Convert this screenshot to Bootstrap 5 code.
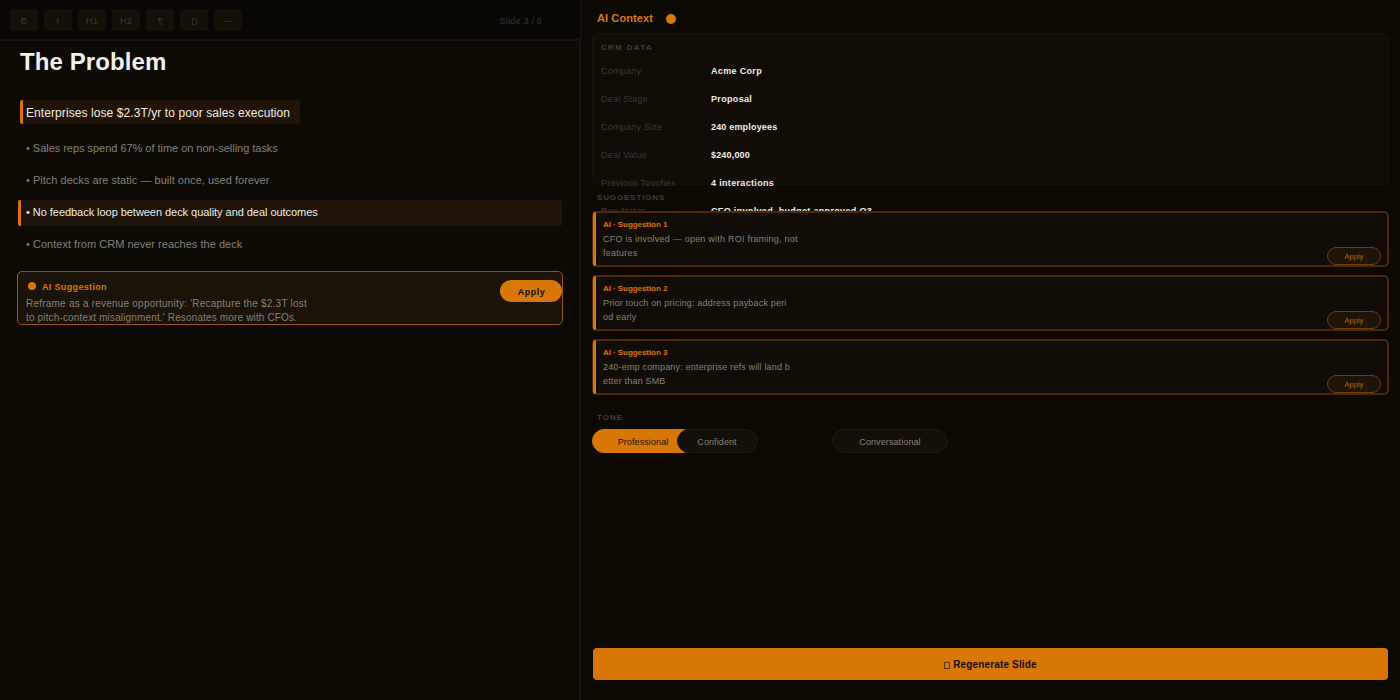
<!DOCTYPE html>
<html lang="en">
<head>
<meta charset="utf-8">
<meta name="viewport" content="width=device-width, initial-scale=1">
<title>AI Context – Slide Editor</title>
<link href="https://cdn.jsdelivr.net/npm/bootstrap@5.3.0/dist/css/bootstrap.min.css" rel="stylesheet">
<style>
:root{--amber:#d97706;--edge:#4a2a06}
body{font-family:"Liberation Sans",Arial,sans-serif;background:#0c0903;color:#f5f5f4;font-size:9px;line-height:14px;height:700px;overflow:hidden}
.editor{width:581px;background:#0d0a03;border-right:1px solid #141412}
.toolbar{height:41px;background:#080703;border-bottom:2px solid #141410;padding:0 38px 0 10px;gap:6px;color:#3b3935}
.tool{width:28px;height:22px;border-radius:3px;background:#141008;line-height:24px;text-align:center;letter-spacing:.3px}
.slide-no{letter-spacing:.2px;padding-top:2px}
.blank-glyph{display:inline-block;width:6px;height:7px;border:1px solid currentColor;opacity:.6;vertical-align:-1px}
.tool .blank-glyph{width:5px}
.canvas{flex:1;padding:0 17px 0 18px;border-right:1px solid #141412}
.slide-title{font-size:24px;line-height:28px;font-weight:700;margin:7px 0 24px 2px;letter-spacing:.1px;color:#f2f0ee}
.headline{width:280px;height:24px;margin-left:2px;border-left:3px solid var(--amber);border-radius:2px;background:#211407;font-size:12px;line-height:26px;padding-left:3px;color:#f0ece6;letter-spacing:.08px}
.points{margin:12px 0 0;padding:0;list-style:none;font-size:11px;color:#83807b}
.points li{height:26px;line-height:25px;padding-left:8px;margin-bottom:6px;border-radius:2px;letter-spacing:.02px}
.points li:first-child{letter-spacing:-.03px}
.points li.hot{background:#1f1409;border-left:3px solid var(--amber);padding-left:5px;color:#f0ece6;letter-spacing:-.045px}
.tip{position:relative;height:54px;margin:13px -1px 0 -1px;border:1.5px solid #9a560a;border-radius:5px;background:#1b1208;padding:7px 8px}
.tip-head{gap:6px;color:var(--amber);font-weight:700;letter-spacing:.34px;padding-left:2px;height:15px;padding-top:1px}
.tip-head .pip{margin-top:-2px}
.pip{width:8px;height:8px;border-radius:50%;background:var(--amber)}
.tip-body{font-size:10px;line-height:14px;color:#83807b;margin-top:3px;letter-spacing:.15px}
.tip-body span{letter-spacing:.22px}
.tip-apply{position:absolute;right:0;top:8px;width:62px;height:22px;border-radius:11px;background:var(--amber);color:#120c03;font-weight:700;line-height:24px;text-align:center;letter-spacing:.5px;padding-left:1px}
.context{flex:1;padding:0 11px}
.ctx-head{height:33px;padding:2px 5px 0;gap:13px;color:var(--amber);font-size:11px;font-weight:700;letter-spacing:.1px}
.ctx-head .pip{width:10px;height:10px;margin-top:2px}
.crm{height:152px;border:2px solid #141006;border-radius:5px;background:#110c05;padding:6px 7px}
.label{font-size:8px;font-weight:700;letter-spacing:1px;color:#403d39}
.crm .label{letter-spacing:1.3px}
.crm dl{margin:2px 0 0}
.crm .pair{height:28px;line-height:28px}
.crm dt{width:110px;font-weight:400;color:#3b3935;letter-spacing:.25px}
.crm dd{margin:0;font-weight:700;color:#f0ece6;letter-spacing:.33px}
.crm dd.snug{letter-spacing:.18px}
.sugg-label{padding:6px 5px;letter-spacing:.86px}
.tone-label{padding:8px 5px 4px}
.advice{position:relative;height:56px;margin-bottom:8px;border:2px solid var(--edge);border-radius:5px;background:#110c05;padding:5px 9px;color:#83807b;letter-spacing:.18px}
.advice.wide-set{letter-spacing:.23px}
.advice::before{content:"";position:absolute;left:-1px;top:-1px;bottom:-1px;width:3px;border-radius:2px 0 0 2px;background:var(--amber)}
.advice h3{font-size:8px;line-height:14px;font-weight:700;color:var(--amber);margin:0;letter-spacing:-.06px}
.mini{position:absolute;right:6px;bottom:0;width:54px;height:18px;border:1.5px solid #6e3e08;border-radius:9px;background:#1f1409;color:#b5650a;font-size:7.5px;line-height:17px;text-align:center;letter-spacing:0}
.tones{height:24px}
.tone{height:24px;border:1.5px solid #1c1a16;border-radius:12px;background:#141008;color:#83807b;line-height:24px;text-align:center;letter-spacing:.1px}
.tone.on{width:102px;background:var(--amber);border-color:var(--amber);color:#1d1003}
.tone.mid{width:81px;margin-left:-17px;padding-right:1px}
.tone.far{width:116px;margin-left:74px}
.regen{height:32px;margin:auto 1px 20px;border-radius:4px;background:var(--amber);color:#120c03;font-size:10px;font-weight:700;line-height:34px;text-align:center;letter-spacing:.15px}
</style>
</head>
<body class="d-flex">
<main class="editor d-flex flex-column flex-shrink-0">
  <div class="toolbar d-flex align-items-center">
    <div class="tool">B</div><div class="tool">I</div><div class="tool">H1</div><div class="tool">H2</div><div class="tool">¶</div><div class="tool"><span class="blank-glyph"></span></div><div class="tool">—</div>
    <div class="slide-no ms-auto">Slide 3 / 6</div>
  </div>
  <div class="canvas">
    <h1 class="slide-title">The Problem</h1>
    <div class="headline">Enterprises lose $2.3T/yr to poor sales execution</div>
    <ul class="points">
      <li>• Sales reps spend 67% of time on non-selling tasks</li>
      <li>• Pitch decks are static — built once, used forever</li>
      <li class="hot">• No feedback loop between deck quality and deal outcomes</li>
      <li>• Context from CRM never reaches the deck</li>
    </ul>
    <div class="tip">
      <div class="tip-head d-flex align-items-center"><span class="pip"></span>AI Suggestion</div>
      <div class="tip-body"><span>Reframe as a revenue opportunity: 'Recapture the $2.3T lost</span><br>to pitch-context misalignment.' Resonates more with CFOs.</div>
      <div class="tip-apply">Apply</div>
    </div>
  </div>
</main>
<aside class="context d-flex flex-column">
  <div class="ctx-head d-flex align-items-center">AI Context<span class="pip"></span></div>
  <section class="crm">
    <div class="label">CRM DATA</div>
    <dl>
      <div class="pair d-flex"><dt>Company</dt><dd>Acme Corp</dd></div>
      <div class="pair d-flex"><dt>Deal Stage</dt><dd>Proposal</dd></div>
      <div class="pair d-flex"><dt>Company Size</dt><dd class="snug">240 employees</dd></div>
      <div class="pair d-flex"><dt>Deal Value</dt><dd class="snug">$240,000</dd></div>
      <div class="pair d-flex"><dt>Previous Touches</dt><dd>4 interactions</dd></div>
      <div class="pair d-flex"><dt>Rep Notes</dt><dd>CFO involved, budget approved Q3</dd></div>
    </dl>
  </section>
  <div class="label sugg-label">SUGGESTIONS</div>
  <section class="advice wide-set"><h3>AI · Suggestion 1</h3>CFO is involved — open with ROI framing, not<br>features<div class="mini">Apply</div></section>
  <section class="advice"><h3>AI · Suggestion 2</h3>Prior touch on pricing: address payback peri<br>od early<div class="mini">Apply</div></section>
  <section class="advice"><h3>AI · Suggestion 3</h3>240-emp company: enterprise refs will land b<br>etter than SMB<div class="mini">Apply</div></section>
  <div class="label tone-label">TONE</div>
  <div class="tones d-flex">
    <div class="tone on">Professional</div>
    <div class="tone mid">Confident</div>
    <div class="tone far">Conversational</div>
  </div>
  <div class="regen"><span class="blank-glyph"></span> Regenerate Slide</div>
</aside>
<script src="https://cdn.jsdelivr.net/npm/bootstrap@5.3.0/dist/js/bootstrap.bundle.min.js"></script>
</body>
</html>
